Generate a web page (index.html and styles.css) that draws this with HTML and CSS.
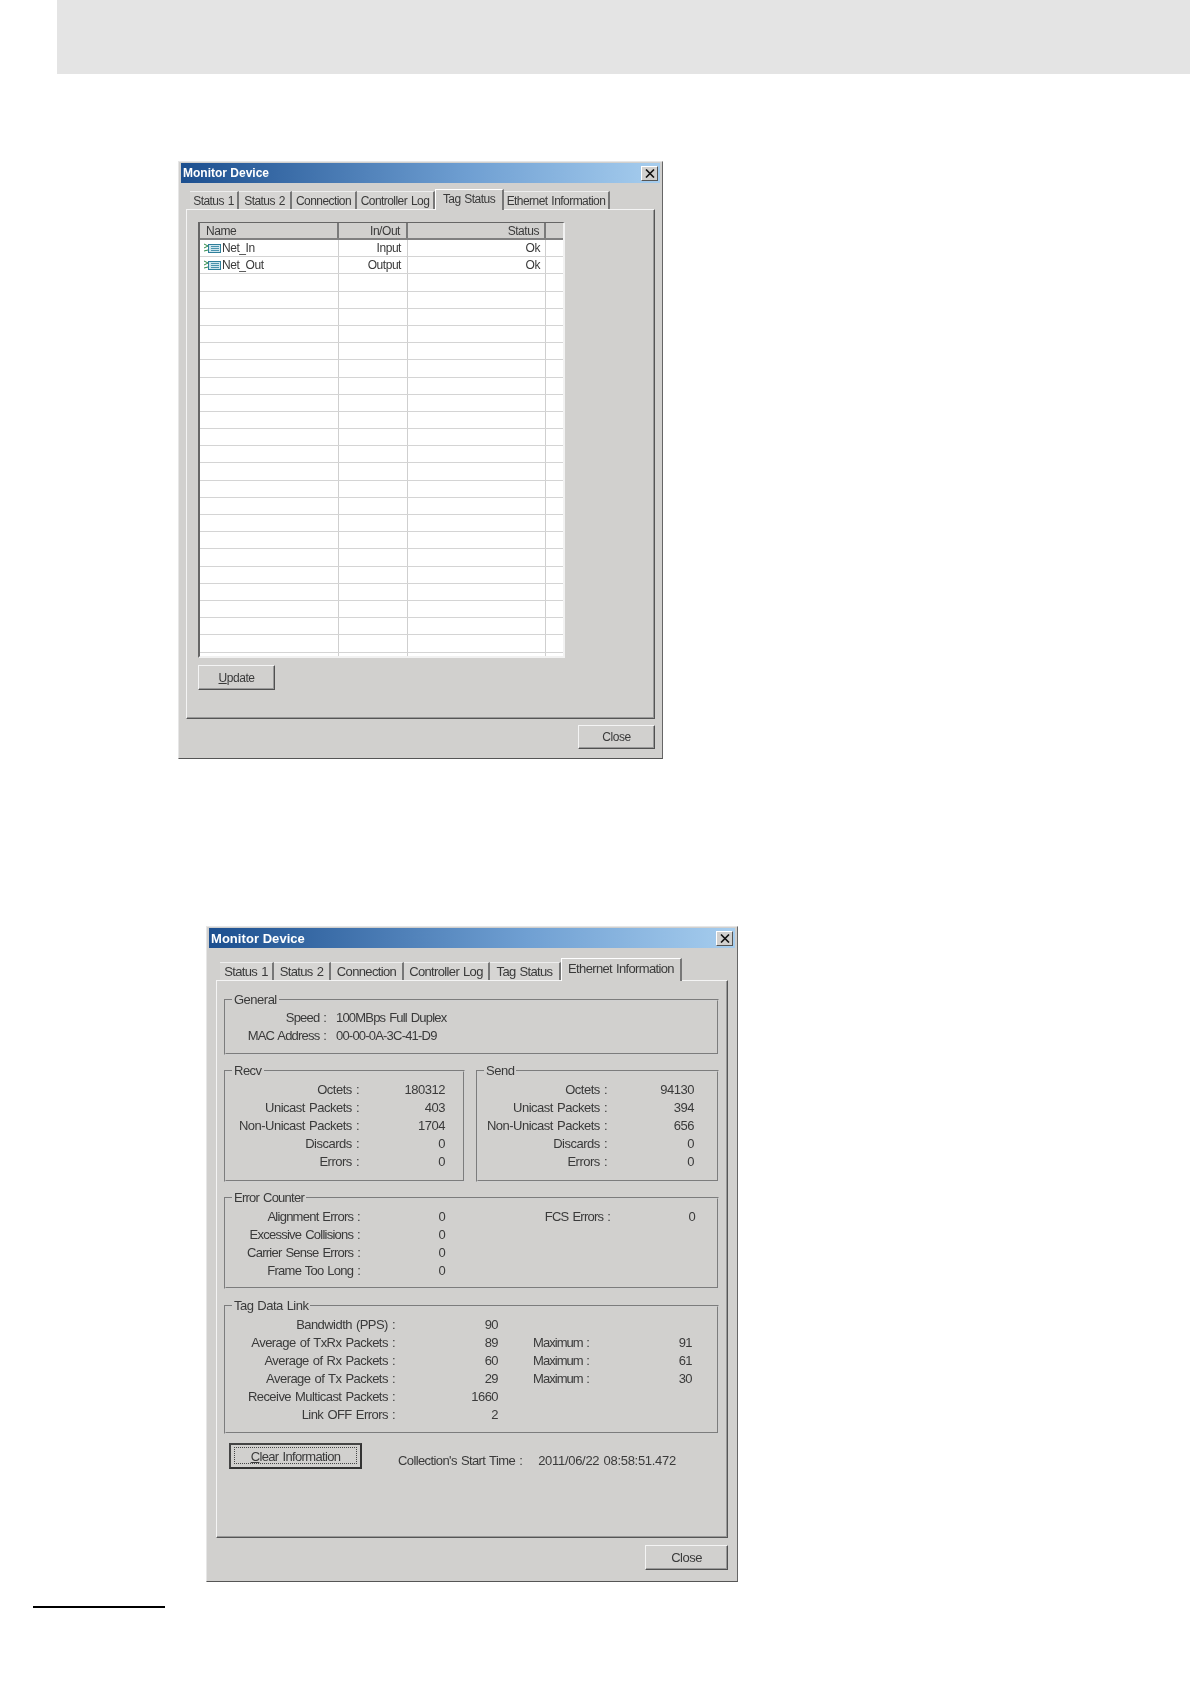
FILE: index.html
```html
<!DOCTYPE html>
<html lang="en">
<head>
<meta charset="utf-8">
<title>Monitor Device</title>
<link rel="stylesheet" href="styles.css">
</head>
<body>
<div class="top-bar"></div>

<section class="dialog dialog-tag">
  <header class="titlebar"><span>Monitor Device</span><span class="close-x"><svg viewBox="0 0 10 9" width="10" height="9"><path d="M1 0.5 L9 8.5 M9 0.5 L1 8.5" stroke="#111" stroke-width="1.6" fill="none"/></svg></span></header>
  <nav class="tabs">
    <span class="tab t1">Status 1</span>
    <span class="tab t2">Status 2</span>
    <span class="tab t3">Connection</span>
    <span class="tab t4">Controller Log</span>
    <span class="tab active t5">Tag Status</span>
    <span class="tab t6">Ethernet Information</span>
  </nav>
  <div class="panel">
    <div class="list">
      <div class="list-row list-head"><span>Name</span><span class="r">In/Out</span><span class="r">Status</span><span></span></div>
      <div class="list-row"><span class="name"><svg class="tag-icon" viewBox="0 0 17 10" width="17" height="10"><rect x="4.5" y="1.5" width="12" height="8" fill="#cfe6ee" stroke="#2f7f9b"/><path d="M7 3.5h8M7 5.5h8M7 7.5h8" stroke="#4a93ad"/><path d="M0 1l4 2M0 5l4-2M0 8l4-1" stroke="#2c8a4a" fill="none"/></svg>Net_In</span><span class="r">Input</span><span class="r">Ok</span><span></span></div>
      <div class="list-row"><span class="name"><svg class="tag-icon" viewBox="0 0 17 10" width="17" height="10"><rect x="4.5" y="1.5" width="12" height="8" fill="#cfe6ee" stroke="#2f7f9b"/><path d="M7 3.5h8M7 5.5h8M7 7.5h8" stroke="#4a93ad"/><path d="M0 1l4 2M0 5l4-2M0 8l4-1" stroke="#2c8a4a" fill="none"/></svg>Net_Out</span><span class="r">Output</span><span class="r">Ok</span><span></span></div>
      <div class="list-row"><span></span><span></span><span></span><span></span></div>
      <div class="list-row"><span></span><span></span><span></span><span></span></div>
      <div class="list-row"><span></span><span></span><span></span><span></span></div>
      <div class="list-row"><span></span><span></span><span></span><span></span></div>
      <div class="list-row"><span></span><span></span><span></span><span></span></div>
      <div class="list-row"><span></span><span></span><span></span><span></span></div>
      <div class="list-row"><span></span><span></span><span></span><span></span></div>
      <div class="list-row"><span></span><span></span><span></span><span></span></div>
      <div class="list-row"><span></span><span></span><span></span><span></span></div>
      <div class="list-row"><span></span><span></span><span></span><span></span></div>
      <div class="list-row"><span></span><span></span><span></span><span></span></div>
      <div class="list-row"><span></span><span></span><span></span><span></span></div>
      <div class="list-row"><span></span><span></span><span></span><span></span></div>
      <div class="list-row"><span></span><span></span><span></span><span></span></div>
      <div class="list-row"><span></span><span></span><span></span><span></span></div>
      <div class="list-row"><span></span><span></span><span></span><span></span></div>
      <div class="list-row"><span></span><span></span><span></span><span></span></div>
      <div class="list-row"><span></span><span></span><span></span><span></span></div>
      <div class="list-row"><span></span><span></span><span></span><span></span></div>
      <div class="list-row"><span></span><span></span><span></span><span></span></div>
      <div class="list-row"><span></span><span></span><span></span><span></span></div>
      <div class="list-row"><span></span><span></span><span></span><span></span></div>
      <div class="list-row"><span></span><span></span><span></span><span></span></div>
    </div>
    <button class="btn btn-update" type="button"><u>U</u>pdate</button>
  </div>
  <footer class="footer"><button class="btn btn-close" type="button">Close</button></footer>
</section>

<section class="dialog dialog-eth">
  <header class="titlebar"><span>Monitor Device</span><span class="close-x"><svg viewBox="0 0 10 9" width="10" height="9"><path d="M1 0.5 L9 8.5 M9 0.5 L1 8.5" stroke="#111" stroke-width="1.6" fill="none"/></svg></span></header>
  <nav class="tabs">
    <span class="tab t1">Status 1</span>
    <span class="tab t2">Status 2</span>
    <span class="tab t3">Connection</span>
    <span class="tab t4">Controller Log</span>
    <span class="tab t5">Tag Status</span>
    <span class="tab active t6">Ethernet Information</span>
  </nav>
  <div class="panel">
    <fieldset class="group">
      <legend>General</legend>
      <div class="grid g-general">
        <span class="r">Speed :</span><span>100MBps Full Duplex</span>
        <span class="r">MAC Address :</span><span>00-00-0A-3C-41-D9</span>
      </div>
    </fieldset>
    <div class="split">
      <fieldset class="group">
        <legend>Recv</legend>
        <div class="grid g-recv">
          <span class="r">Octets :</span><span class="r">180312</span>
          <span class="r">Unicast Packets :</span><span class="r">403</span>
          <span class="r">Non-Unicast Packets :</span><span class="r">1704</span>
          <span class="r">Discards :</span><span class="r">0</span>
          <span class="r">Errors :</span><span class="r">0</span>
        </div>
      </fieldset>
      <fieldset class="group">
        <legend>Send</legend>
        <div class="grid g-send">
          <span class="r">Octets :</span><span class="r">94130</span>
          <span class="r">Unicast Packets :</span><span class="r">394</span>
          <span class="r">Non-Unicast Packets :</span><span class="r">656</span>
          <span class="r">Discards :</span><span class="r">0</span>
          <span class="r">Errors :</span><span class="r">0</span>
        </div>
      </fieldset>
    </div>
    <fieldset class="group group-error">
      <legend>Error Counter</legend>
      <div class="grid g-error">
        <span class="r">Alignment Errors :</span><span class="r">0</span><span class="r">FCS Errors :</span><span class="r">0</span>
        <span class="r">Excessive Collisions :</span><span class="r">0</span><span></span><span></span>
        <span class="r">Carrier Sense Errors :</span><span class="r">0</span><span></span><span></span>
        <span class="r">Frame Too Long :</span><span class="r">0</span><span></span><span></span>
      </div>
    </fieldset>
    <fieldset class="group group-tag">
      <legend>Tag Data Link</legend>
      <div class="grid g-tag">
        <span class="r">Bandwidth (PPS) :</span><span class="r">90</span><span></span><span></span>
        <span class="r">Average of TxRx Packets :</span><span class="r">89</span><span class="max">Maximum :</span><span class="r">91</span>
        <span class="r">Average of Rx Packets :</span><span class="r">60</span><span class="max">Maximum :</span><span class="r">61</span>
        <span class="r">Average of Tx Packets :</span><span class="r">29</span><span class="max">Maximum :</span><span class="r">30</span>
        <span class="r">Receive Multicast Packets :</span><span class="r">1660</span><span></span><span></span>
        <span class="r">Link OFF Errors :</span><span class="r">2</span><span></span><span></span>
      </div>
    </fieldset>
    <div class="action-row">
      <button class="btn btn-clear" type="button"><span class="focus-ring"><u>C</u>lear Information</span></button>
      <span class="start-label">Collection's Start Time :</span>
      <span class="start-value">2011/06/22 08:58:51.472</span>
    </div>
  </div>
  <footer class="footer"><button class="btn btn-close" type="button">Close</button></footer>
</section>

<div class="foot-rule"></div>
</body>
</html>
```

FILE: styles.css
```css
* { box-sizing: border-box; }
html, body { margin: 0; padding: 0; background: #fff; }
body { width: 1190px; height: 1684px; overflow: hidden; font-family: "Liberation Sans", Arial, sans-serif; color: #3a3a3a; }

.top-bar { height: 74px; margin-left: 57px; background: #e4e4e4; }
.foot-rule { width: 132px; height: 2px; margin: 24px 0 0 33px; background: #000; }

.dialog {
  display: flex; flex-direction: column;
  padding: 1px 2px 0;
  background: #d1d0ce;
  border: 1px solid; border-color: #e6e6e6 #666 #555 #e6e6e6;
  filter: blur(0.35px);
  word-spacing: 1px;
}
.dialog-tag { width: 485px; height: 598px; margin: 87px 0 0 178px; font-size: 12px; letter-spacing: -0.45px; }
.dialog-eth { width: 532px; height: 656px; margin: 167px 0 0 206px; font-size: 13px; letter-spacing: -0.5px; }

.titlebar {
  display: flex; align-items: center; justify-content: space-between;
  height: 20px; flex: none; padding: 0 2px;
  background: linear-gradient(90deg, #1c4f8f, #6f9fd2 60%, #a6cdee);
  color: #fff; font-weight: 700; font-size: 12px; letter-spacing: 0; word-spacing: 0;
}
.dialog-eth .titlebar { font-size: 13px; letter-spacing: 0.05px; }
.close-x {
  display: flex; align-items: center; justify-content: center;
  width: 17px; height: 15px; background: #d1d0ce;
  border: 1px solid; border-color: #fff #555 #555 #fff;
}

.tabs { display: flex; align-items: flex-end; flex: none; height: 26px; margin: 0 0 0 9px; letter-spacing: -0.55px; }
.dialog-eth .tabs { height: 32px; margin-left: 11px; letter-spacing: -0.65px; }
.tab {
  display: flex; align-items: center; justify-content: center;
  height: 18px; border-right: 2px solid #777; white-space: nowrap;
  background: #d6d5d3; border-top: 1px solid #eee;
}
.tab.active { height: 21px; margin-bottom: -1px; padding-bottom: 3px; background: #d1d0ce; border-top: 1px solid #fff; border-left: 1px solid #fff; z-index: 1; }
.dialog-eth .tab.active { height: 23px; }
.dialog-tag .t1 { width: 49px; } .dialog-tag .t2 { width: 53px; } .dialog-tag .t3 { width: 65px; }
.dialog-tag .t4 { width: 78px; } .dialog-tag .t5 { width: 69px; } .dialog-tag .t6 { width: 106px; }
.dialog-eth .t1 { width: 54px; } .dialog-eth .t2 { width: 57px; } .dialog-eth .t3 { width: 73px; }
.dialog-eth .t4 { width: 86px; } .dialog-eth .t5 { width: 71px; } .dialog-eth .t6 { width: 121px; }

.panel {
  flex: none;
  border: 1px solid; border-color: #f4f4f4 #555 #555 #f4f4f4;
  box-shadow: inset -1px -1px 0 #999;
}
.dialog-tag .panel { height: 510px; margin: 0 5px; padding: 12px 0 0 11px; }
.dialog-eth .panel { height: 558px; margin: 0 7px; padding: 12px 8px 0 7px; }

.list { width: 367px; height: 436px; overflow: hidden; background: #fff; border-left: 2px solid #666; border-top: 1px solid #666; border-bottom: 2px solid #f2f2f2; border-right: 2px solid #f2f2f2; }
.list-row { display: grid; grid-template-columns: 139px 69px 138px 19px; height: 17.2px; line-height: 16px; border-bottom: 1px solid #d4d4d4; }
.list-row > span { border-right: 1px solid #cfcfcf; min-width: 0; overflow: hidden; }
.list-row > span:last-child { border-right: 0; }
.list-row > .r { padding-right: 6px; }
.list-row > .r:nth-child(3) { padding-right: 5px; }
.list-head { height: 17px; background: #d1d0ce; border-bottom: 2px solid #808080; }
.list-head > span { border-right: 2px solid #7a7a7a; padding-left: 6px; }
.list-head > span:last-child { border-right: 0; }
.name { display: flex; align-items: center; padding-left: 4px; }
.tag-icon { flex: none; margin-right: 1px; }

.r { text-align: right; }

.btn {
  display: block; padding: 0; background: #d1d0ce; font: inherit; letter-spacing: inherit; word-spacing: inherit; color: inherit;
  border: 1px solid; border-color: #f4f4f4 #505050 #505050 #f4f4f4;
  box-shadow: inset -1px -1px 0 #999;
}
.btn-update { width: 77px; height: 25px; margin: 7px 0 0 0; }
.footer { display: flex; justify-content: flex-end; flex: none; padding-right: 5px; margin-top: 6px; }
.dialog-tag .btn-close { width: 77px; height: 24px; }
.dialog-eth .footer { padding-right: 7px; margin-top: 7px; }
.dialog-eth .btn-close { width: 83px; height: 25px; }

.group { margin: 0; padding: 0; min-width: 0; border: 2px groove #d0d0d0; }
.group legend { padding: 0 2px; margin-left: 6px; line-height: 14px; }
.split { display: grid; grid-template-columns: 241px 243px; column-gap: 11px; margin-top: 9px; }
.group-error { margin-top: 9px; letter-spacing: -0.75px; }
.group-tag { margin-top: 10px; letter-spacing: -0.55px; }

.grid { display: grid; grid-auto-rows: 18px; line-height: 18px; }
.g-general { grid-template-columns: 100px 1fr; column-gap: 10px; padding: 2px 0 8px; letter-spacing: -0.8px; }
.g-recv { grid-template-columns: 133px 86px; padding: 3px 0 9px; }
.g-send { grid-template-columns: 129px 87px; padding: 3px 0 9px; }
.g-error { grid-template-columns: 134px 85px 165px 85px; padding: 3px 0 7px; }
.g-tag { grid-template-columns: 169px 103px 125px 69px; padding: 3px 0 8px; }
.max { margin-left: 35px; letter-spacing: -0.95px; }

.action-row { display: flex; align-items: flex-start; margin-top: 9px; padding-left: 5px; }
.start-label { margin: 10px 16px 0 36px; letter-spacing: -0.6px; }
.start-value { margin-top: 10px; letter-spacing: -0.3px; }
.btn-clear { width: 133px; height: 26px; padding: 2px 3px 3px; border: 2px solid; border-color: #444 #333 #333 #444; box-shadow: none; letter-spacing: -0.65px; }
.focus-ring { display: block; height: 100%; border: 1px dotted #444; line-height: 17px; }
```
